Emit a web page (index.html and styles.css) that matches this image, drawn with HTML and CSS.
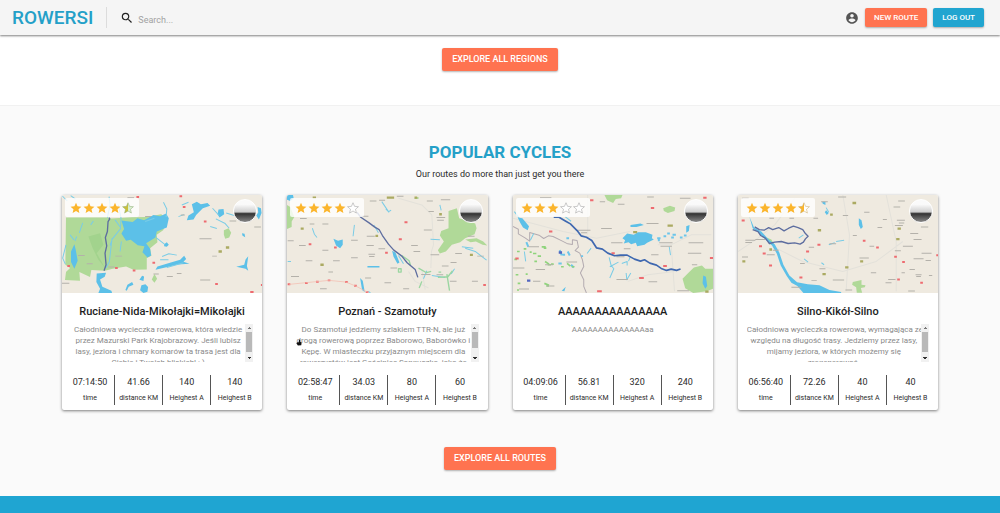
FILE: index.html
```
<!DOCTYPE html>
<html lang="en">
<head>
<meta charset="utf-8">
<meta name="viewport" content="width=device-width, initial-scale=1">
<title>Rowersi</title>
<link rel="stylesheet" href="styles.css">
</head>
<body>
<svg class="defs" aria-hidden="true">
  <defs>
    <linearGradient id="half"><stop offset=".5" stop-color="#fbb52c"/><stop offset=".5" stop-color="#fff"/></linearGradient>
    <linearGradient id="half-green"><stop offset=".5" stop-color="#c9bf3a"/><stop offset=".5" stop-color="#d9efd0"/></linearGradient>
    <path id="star" d="M12 1.500l3.100 7.200 7.800.7-5.900 5.100 1.800 7.600L12 18l-6.800 4.100 1.800-7.600-5.900-5.100 7.800-.7z"/>
  </defs>
</svg>

<header class="topbar">
  <a class="logo" href="#">ROWERSI</a>
  <form class="search" role="search">
    <svg class="search-icon" viewBox="0 0 24 24" aria-hidden="true"><path d="M15.500 14h-.79l-.28-.27A6.470 6.470 0 0 0 16 9.500 6.500 6.500 0 1 0 9.500 16c1.610 0 3.090-.59 4.230-1.570l.27.28v.79l5 4.990L20.490 19l-4.990-5zm-6 0C7.010 14 5 11.990 5 9.500S7.010 5 9.500 5 14 7.010 14 9.500 11.990 14 9.500 14z"/></svg>
    <input class="search-input" type="search" placeholder="Search..." aria-label="Search">
  </form>
  <nav class="actions">
    <a class="account" href="#" aria-label="Account"><svg viewBox="0 0 24 24"><path d="M12 2C6.480 2 2 6.480 2 12s4.480 10 10 10 10-4.480 10-10S17.520 2 12 2zm0 3c1.660 0 3 1.340 3 3s-1.340 3-3 3-3-1.340-3-3 1.340-3 3-3zm0 14.200c-2.500 0-4.710-1.280-6-3.220.03-1.990 4-3.080 6-3.080 1.990 0 5.970 1.090 6 3.080-1.290 1.940-3.500 3.220-6 3.220z"/></svg></a>
    <button class="btn btn-small" type="button">NEW ROUTE</button>
    <button class="btn btn-small btn-blue" type="button">LOG OUT</button>
  </nav>
</header>

<main>
  <section class="regions">
    <button class="btn" type="button">EXPLORE ALL REGIONS</button>
  </section>

  <section class="cycles">
    <h2 class="heading">POPULAR CYCLES</h2>
    <p class="subheading">Our routes do more than just get you there</p>

    <div class="cards">
      <article class="card">
        <div class="cover">
          <svg class="map" viewBox="36 30 600 295" preserveAspectRatio="none" aria-hidden="true">
            <path class="wood" d="M48 98L175 98 182 101 245 97 290 96 333 88 345 96 340 135 320 150 322 172 300 190 304 213 290 220 290 254 250 255 228 245 188 252 165 258 124 256 120 277 88 262 90 288 45 286 48 262 60 250 46 240z"/>
            <path class="wood-dark" d="M115 155L150 145 160 180 140 205 165 250 145 225 128 190z"/>
            <path class="water" d="M214 107L248 111 262 100 282 106 310 90 330 94 348 86 356 100 350 128 320 140 316 158 288 175 300 192 303 212 292 218 277 202 283 184 263 181 242 165 228 168 214 146 222 132z"/>
            <path class="water" d="M140 266L168 264 164 276 150 284 157 306 184 318 186 325 145 325 150 312 139 292z M274 302l12-3 8 8-2 14-12 4-10-8z M425 58l15-8 12 8 20-4 8 8-22 8-20 20-8 14-20 2 5-14 16-10z M505 74l15-2 2 16-14 10-6-10z M322 245l40-12 28-8 12-12 6 10-8 8 18 6-36 2-30 8-36 8z M342 178l8-6 6 8-6 6-8-2z M622 66l10 4 2 14-8 20-8-12 6-10z M575 145l8 2 2 10-8-4z M594 214l-4 30 4 14-8-6-28-6 24-6 4-16z M268 285l8-12 6 2-2 14z M232 300l14-8 4 8-14 6-6 12-4-2z M63 200l10-22 4 16 6 34-10 24-10-20z"/>
            <path class="stream" d="M177 35L180 60 172 98M205 60l8 40-2 32-24 30-7 20M186 160l-8 70-10 20M195 105l18 25M214 170l-4 30M340 52l10 20-2 24M336 215l20-8 24 4M330 225l25 0M350 248l50-14M487 70l20 22M395 60l20-8M385 95l16-6M497 102l28 14 12 14M480 125l20 6M528 84l24 8M62 32l14 10M37 33l15 15M98 114l-10 30M48 180l-10 40 8 18M80 155l-5 14M130 108l-8 12M60 150l12 15M318 158l25 20M285 110l28-10"/>
            <path class="wood" d="M521 136l14-6 8 14-6 14-12 4-4-12zM313 268l8 14-8 12-8-10z"/>
            <path class="olive" d="M505 200h10M527 188h10"/>
            <path class="label" d="M232 38h20M448 162h36M450 286h30M486 214h14M350 275h18M380 266h14M538 108h20M612 126h20M84 212h20M110 237h18M196 214h20M285 95h18M36 296h22M310 268h16M175 247h18M392 90h12"/>
            <path class="badge" d="M259 36h8M388 34h8M398 66h8M461 110h8M52 244h8M195 250h8M248 257h8M307 234h8M495 298h8M600 322h10M632 301h6"/>
            <path class="track" d="M177 98l2 4-5 8-2 30-6 18 4 25-5 22 3 35-6 18"/>
          </svg>
          <span class="rating" role="img" aria-label="4.5 out of 5 stars">
            <svg viewBox="0 0 24 24"><use href="#star"/></svg><svg viewBox="0 0 24 24"><use href="#star"/></svg><svg viewBox="0 0 24 24"><use href="#star"/></svg><svg viewBox="0 0 24 24"><use href="#star"/></svg><svg class="part part-green" viewBox="0 0 24 24"><use href="#star"/></svg>
          </span>
          <span class="avatar"></span>
        </div>
        <h3 class="title">Ruciane-Nida-Mikołajki=Mikołajki</h3>
        <div class="about">
          <p class="text">Całodniowa wycieczka rowerowa, która wiedzie<br>przez Mazurski Park Krajobrazowy. Jeśli lubisz<br>lasy, jeziora i chmary komarów ta trasa jest dla<br>Ciebie i Twoich bliskich! : )</p>
          <span class="scroll" aria-hidden="true"></span>
        </div>
        <dl class="stats">
          <div class="stat"><dt>time</dt><dd>07:14:50</dd></div>
          <div class="stat"><dt>distance KM</dt><dd>41.66</dd></div>
          <div class="stat"><dt>Heighest A</dt><dd>140</dd></div>
          <div class="stat"><dt>Heighest B</dt><dd>140</dd></div>
        </dl>
      </article>

      <article class="card">
        <div class="cover">
          <svg class="map" viewBox="36 30 600 295" preserveAspectRatio="none" aria-hidden="true">
            <path class="wood" d="M520 78L545 70 552 100 600 116 604 130 598 148 570 160 555 172 530 180 512 200 494 206 488 196 506 170 494 152 498 138 520 130zM36 60l10 6 12 30-8 14 0 16-14 6zM570 164l34-4 20 10 12 12-14-2-20-10-16 2zM420 36l10 0 0 6-12 0z"/>
            <path class="road" d="M370 40l70 20 30 30 5 90-6 20-2 50M440 255l10 60M400 260l20 30 40 20"/>
            <path class="water" d="M175 162l14 6 14-4 0 16-8 10-12-8zM351 198l10 5 12 30-6 4-12-22zM255 280l8 8 6 34-8-6zM36 30l18 0 2 10-10 8-10-4zM277 244l36 0 0 4-36 0z"/>
            <path class="stream" d="M320 50l20 30 8-4M332 72l10 10M112 130l6 18 8 10M238 120l-4 34M296 120l14 24M466 163l28 2M570 190l30 10 34 26M560 186l34 4M494 60l4 16M38 230h10M370 212l15 25M470 272l40 6M528 268l10-16M455 258l-10 24M280 320l6 5"/>
            <path class="park" d="M380 212l22 16 4 14M370 252h8v10h-8zM430 250l24 14 14-4M515 268l8 50M490 262h8M488 278l30-2 14-18M440 290l-8 20"/>
            <path class="olive" d="M113 38h10M77 131h9M136 240h10M301 153h8M335 38h22M418 38h8M584 210h9M492 88h8"/>
            <path class="label" d="M75 101h20M104 117h14M142 117h18M38 168h18M72 182h20M142 196h18M228 166h20M228 219h20M174 228h20M92 228h20M48 275h24M284 48h20M312 46h18M365 34h20M455 48h18M497 44h28M258 94h22M274 182h22M310 192h20M275 154h24M415 200h20M446 135h24M460 80h16M484 98h26M486 106h20M408 182h20M346 250h20M270 280h18M328 294h20M135 312h20M384 312h18M438 269h28M484 270h20M524 290h20M540 206h20M606 214h20M578 154h20M500 244h20M466 210h26M280 208h20M282 215h16M590 290h18M160 262h14M526 233h18"/>
            <path class="badge" d="M177 188h8M101 178h8M371 163h9M330 204h8M388 112h9M38 299h8M90 295h8M123 291h8M158 287h8M210 292h8M237 303h8M272 323h8M624 301h8"/>
            <path class="rail" d="M42 299l50-5 70-7 50 5 30 12 36 19"/>
            <path class="track" d="M246 82l10 14 26 18 16 12 14 8 10 18 18 26 16 18 24 18 16 20 24 20 8 24"/>
          </svg>
          <span class="rating" role="img" aria-label="4 out of 5 stars">
            <svg viewBox="0 0 24 24"><use href="#star"/></svg><svg viewBox="0 0 24 24"><use href="#star"/></svg><svg viewBox="0 0 24 24"><use href="#star"/></svg><svg viewBox="0 0 24 24"><use href="#star"/></svg><svg class="empty" viewBox="0 0 24 24"><use href="#star"/></svg>
          </span>
          <span class="avatar"></span>
        </div>
        <h3 class="title">Poznań - Szamotuły</h3>
        <div class="about">
          <p class="text">Do Szamotuł jedziemy szlakiem TTR-N, ale już<br>drogą rowerową poprzez Baborowo, Baborówko i<br>Kępę. W miasteczku przyjaznym miejscem dla<br>rowerzystów jest Gościniec Sanguszko, jako że</p>
          <span class="scroll scroll-short" aria-hidden="true"></span>
        </div>
        <dl class="stats">
          <div class="stat"><dt>time</dt><dd>02:58:47</dd></div>
          <div class="stat"><dt>distance KM</dt><dd>34.03</dd></div>
          <div class="stat"><dt>Heighest A</dt><dd>80</dd></div>
          <div class="stat"><dt>Heighest B</dt><dd>60</dd></div>
        </dl>
        <svg class="pointer" viewBox="0 0 16 18" aria-hidden="true"><path d="M8 1l3 1 0 5 4 2-1 7-9 1-4-6 2-3 4 1z"/></svg>
      </article>

      <article class="card">
        <div class="cover">
          <svg class="map" viewBox="36 30 600 295" preserveAspectRatio="none" aria-hidden="true">
            <path class="wood" d="M544 282l20-20 14-14 24-6 10 10 24 0 0 60-20 8-40 5-24-14zM310 30l54 0-4 10-16 2-8 12-18-8zM486 70l20-8 16 6-2 10-20 6-12-6z"/>
            <path class="road" d="M36 100l150 40 100 20 100-20M470 180l40 0 60-30 60 0M510 180l10 140M260 30l0 120M380 290l60-20 80-10"/>
            <path class="border" d="M36 125l16 8 0 14 20 12 14 10 0-26 28 8 14 10 14-8 14 2 28 14 16 8 14 2 0-14 14 2 4 20-10 10 14 8 8 20 4 20-10 20 10 20 0 20 8 20"/>
            <path class="water" d="M378 146l20 4 12-8 24 0 20 8-2 10 6 4-20 10-8 6-22 4-4-10-14 4-8-6-14 4 4-10-8-6zM388 120l30-4 10 4-22 6-18 0zM50 98l14 2 20 24-4 12-14-8-8-14zM606 272l8 4 4 28-6 8-8-16zM182 318l12-12-4 14zM555 124l10-4-2 18-8 6z"/>
            <path class="stream" d="M324 218l6 24 8 10-12 28M326 246l26-14M362 236l16-6 0 12M388 215l-6 14M375 265l2 20 12-20M504 185l4 26M70 200l4 30M98 146l-10 20M270 190l-12 16M40 80l14 18M192 95l18 14"/>
            <path class="specks-blue" d="M468 160h10M487 154h8M498 146h8M514 150h10M510 158h8M536 158h8M548 152h8M176 196l6 16M184 210h8M172 236h10M200 200l6 12M76 172l6 14M196 160h8M210 240l8 8M240 214h6M470 166h6"/>
            <path class="specks" d="M48 200h8M68 192h8M110 214h10M128 190h8M122 186h12M132 230l12 8M140 240h10M100 230h8M150 238h8M198 236l10 8M212 246h8M40 224h8M96 206h10M86 202h6M44 270h8M180 246h8M50 296h8M130 296l14 6M136 304h8M74 268h6M48 316h6"/>
            <path class="olive" d="M396 142h12M499 122h16M612 321h10"/>
            <path class="label" d="M117 38h34M296 50h16M350 58h20M438 36h20M536 40h32M300 131h32M330 174h34M436 116h36M368 192h20M450 210h22M474 174h40M478 184h34M562 174h44M560 205h40M572 240h16M228 136h40M240 144h18M82 186h32M36 250h34M104 254h28M196 232h32M96 290h22M54 313h30M346 284h34M442 291h26M528 318h36M132 240h24M136 304h24M346 216h24"/>
            <path class="badge" d="M267 46h10M449 69h10M144 140h10M331 205h10M486 244h11M414 280h14M288 320h14M43 221h10M606 38h10M626 220h10"/>
            <path class="badge-blue" d="M173 203h10M78 288h10"/>
            <path class="track track-blue" d="M158 97l16 0 20 12 14 8 20 20 12 16 16 4 16 10 14 22 18 4 16 12 20 8 18-2 20 0 22 12 18 6 12-4 16 10 20 6 14 10 16 6 14-4 16 4 12-4"/>
          </svg>
          <span class="rating" role="img" aria-label="3 out of 5 stars">
            <svg viewBox="0 0 24 24"><use href="#star"/></svg><svg viewBox="0 0 24 24"><use href="#star"/></svg><svg viewBox="0 0 24 24"><use href="#star"/></svg><svg class="empty" viewBox="0 0 24 24"><use href="#star"/></svg><svg class="empty" viewBox="0 0 24 24"><use href="#star"/></svg>
          </span>
          <span class="avatar"></span>
        </div>
        <h3 class="title">AAAAAAAAAAAAAAA</h3>
        <div class="about">
          <p class="text">AAAAAAAAAAAAAAaa</p>
        </div>
        <dl class="stats">
          <div class="stat"><dt>time</dt><dd>04:09:06</dd></div>
          <div class="stat"><dt>distance KM</dt><dd>56.81</dd></div>
          <div class="stat"><dt>Heighest A</dt><dd>320</dd></div>
          <div class="stat"><dt>Heighest B</dt><dd>240</dd></div>
        </dl>
      </article>

      <article class="card">
        <div class="cover">
          <svg class="map" viewBox="36 30 600 295" preserveAspectRatio="none" aria-hidden="true">
            <path class="road" d="M36 200l60-40 50-40 60-80M150 190l80 40 120 30 100-30 80-60M350 30l20 120-10 170M480 30l30 140 0 150"/>
            <path class="wood" d="M122 158l14 6 8 14-14 0zM380 292l26-6 0 14 12 2-2 6-12 2 4 14-16 0-2-16-12-8z"/>
            <path class="water" d="M70 95L84 128 106 140 128 164 146 178 160 204 172 240 190 272 213 293 245 299 280 302 310 316 345 322 345 325 232 325 214 304 196 294 182 274 164 242 152 206 138 182 120 166 98 144 80 130z"/>
            <path class="water" d="M398 100l8 6 4 20-6 6-6-12zM300 76l8 8-6 6-6-8zM288 50l10 0 0 10-8-4z"/>
            <path class="stream" d="M308 180l18-6M330 170l24-4M234 222l12 10M286 234l8 6M218 160l14-10M300 68l8 14"/>
            <path class="olive" d="M379 54h11M275 136h10M312 89h8M514 131h10M510 163h10M49 230h9M357 248h10M289 268h10M402 230h9M130 194h8"/>
            <path class="label" d="M48 40h20M285 50h20M336 36h24M516 48h20M502 66h20M414 82h16M350 92h16M470 104h12M512 106h24M518 114h16M566 56h18M570 95h20M584 126h22M552 146h24M506 122h24M58 166h30M58 173h20M88 164h30M48 217h18M122 210h24M140 196h18M248 187h16M222 236h14M280 252h18M310 177h20M380 152h12M430 184h14M400 220h28M454 128h14M506 198h18M562 164h24M530 184h30M586 205h30M562 222h30M598 227h16M434 264h16M486 284h22M478 294h18M568 270h18M570 275h14M608 272h10M526 264h10M256 287h16M196 308h30M320 286h34M358 316h20M546 319h20M550 254h16M130 100h14M190 100h14M262 100h14"/>
            <path class="badge" d="M47 107h9M99 184h9M110 206h9M129 242h9M240 200h9M274 180h9M220 278h9M410 168h8M450 188h8M504 216h8M528 232h8M582 294h8M513 284h8M630 211h7"/>
            <path class="track" d="M86 126l14 8 14 2 14-8 12 6 18-6 16 10 14-8 14-6 14 4 14 6 8 12 8 8-8 8-6 10-10 6-16-4-20 2-20-6-20 2-16 4-12-16-14-8-8-12-16-6"/>
          </svg>
          <span class="rating" role="img" aria-label="4.5 out of 5 stars">
            <svg viewBox="0 0 24 24"><use href="#star"/></svg><svg viewBox="0 0 24 24"><use href="#star"/></svg><svg viewBox="0 0 24 24"><use href="#star"/></svg><svg viewBox="0 0 24 24"><use href="#star"/></svg><svg class="part" viewBox="0 0 24 24"><use href="#star"/></svg>
          </span>
          <span class="avatar"></span>
        </div>
        <h3 class="title">Silno-Kikół-Silno</h3>
        <div class="about">
          <p class="text">Całodniowa wycieczka rowerowa, wymagająca ze<br>względu na długość trasy. Jedziemy przez lasy,<br>mijamy jeziora, w których możemy się<br>zregenerować.</p>
          <span class="scroll" aria-hidden="true"></span>
        </div>
        <dl class="stats">
          <div class="stat"><dt>time</dt><dd>06:56:40</dd></div>
          <div class="stat"><dt>distance KM</dt><dd>72.26</dd></div>
          <div class="stat"><dt>Heighest A</dt><dd>40</dd></div>
          <div class="stat"><dt>Heighest B</dt><dd>40</dd></div>
        </dl>
      </article>
    </div>

    <button class="btn" type="button">EXPLORE ALL ROUTES</button>
  </section>
</main>
<footer class="footer"></footer>
</body>
</html>
```
FILE: styles.css
```
* { box-sizing: border-box; }

body {
  margin: 0;
  min-height: 100vh;
  display: flex;
  flex-direction: column;
  background: #fff;
  color: #2b2b2b;
  font-family: Roboto, "Liberation Sans", sans-serif;
  font-size: 9px;
}

h2, h3, p, dl, dd { margin: 0; }

.defs { position: absolute; width: 0; height: 0; }

.topbar {
  position: relative;
  display: flex;
  align-items: center;
  height: 35px;
  padding: 0 16px 0 12px;
  background: #f5f5f5;
  box-shadow: 0 1px 2px rgba(0, 0, 0, .5);
}

.logo {
  padding-right: 13px;
  border-right: 1px solid #dcdcdc;
  color: #24a0c8;
  font-size: 19px;
  font-weight: 500;
  line-height: 21px;
  text-decoration: none;
}

.search {
  display: flex;
  flex: 1;
  align-items: center;
  gap: 4px;
  padding-left: 13px;
}

.search-icon { width: 14px; height: 14px; fill: #222; }

.search-input {
  flex: 1;
  min-width: 0;
  padding: 4px 0 0;
  border: 0;
  outline: 0;
  background: none;
  font: 9px Roboto, sans-serif;
}

.search-input::placeholder { color: #a2a2a2; }

.actions { display: flex; align-items: center; gap: 6px; }

.account { display: flex; }
.account svg { width: 14px; height: 14px; fill: #555; }

.btn {
  padding: 0 10px;
  border: 0;
  border-radius: 2px;
  background: #ff7350;
  box-shadow: 0 1px 2px rgba(0, 0, 0, .3);
  color: #fff;
  font: 500 9px/23px Roboto, sans-serif;
}

.btn-small { padding: 0 9px; font-size: 8px; line-height: 19px; }
.btn-blue { background: #21a5d0; }

.regions {
  display: flex;
  justify-content: center;
  padding: 13px 0 34px;
}

.cycles {
  display: flex;
  flex-direction: column;
  align-items: center;
  padding: 36px 62px 26px;
  border-top: 1px solid #f1f1f1;
  background: #fafafa;
}

.heading {
  color: #24a0c8;
  font-size: 17px;
  font-weight: 700;
  line-height: 20px;
}

.subheading { padding: 6px 0 15px; line-height: 12px; }

.cards {
  display: grid;
  grid-template-columns: repeat(4, minmax(0, 1fr));
  gap: 25px;
  width: 100%;
  margin-bottom: 37px;
}

.card {
  position: relative;
  border-radius: 2px;
  background: #fff;
  box-shadow: 0 1px 3px rgba(0, 0, 0, .5);
}

.cover { position: relative; }

.map {
  display: block;
  width: 100%;
  height: 98px;
  border-radius: 2px 2px 0 0;
  background: #efeae0;
}

.map path { fill: none; stroke-linejoin: round; }
.map .wood { fill: #b0d998; }
.map .wood-dark { fill: #a2d38d; }
.map .water { fill: #5cc0e8; }
.map .stream { stroke: #7accE6; stroke-width: 3; }
.map .park { stroke: #9ad6a0; stroke-width: 4; }
.map .road { stroke: #e3e1da; stroke-width: 3; }
.map .border { stroke: #b3abb0; stroke-width: 3; }
.map .specks { stroke: #8fd47c; stroke-width: 5; }
.map .specks-blue { stroke: #6cc5ea; stroke-width: 6; }
.map .olive { stroke: #abaa62; stroke-width: 7; }
.map .label { stroke: #b4b1aa; stroke-width: 3; }
.map .badge { stroke: #ee6b70; stroke-width: 6; }
.map .badge-blue { stroke: #5266c0; stroke-width: 7; }
.map .rail { stroke: #f4b8ab; stroke-width: 2; }
.map .track { stroke: #5d6d9f; stroke-width: 4; }
.map .track-blue { stroke: #3f68b0; stroke-width: 5; }

.rating {
  position: absolute;
  top: 3px;
  left: 3px;
  display: flex;
  gap: 1px;
  padding: 4px 5px 3px;
  border-radius: 2px;
  background: rgba(255, 255, 255, .8);
}

.rating svg { width: 12px; height: 12px; fill: #fbb52c; }
.rating .empty { fill: #fff; stroke: #999; stroke-width: 1; }
.rating .part { fill: url(#half); stroke: #c9a860; stroke-width: 1; }
.rating .part-green { fill: url(#half-green); stroke: #8dab72; }

.avatar {
  position: absolute;
  top: 4px;
  right: 5px;
  width: 24px;
  height: 24px;
  border: 1px solid #fff;
  border-radius: 50%;
  background: linear-gradient(#fafafa 20%, #cfcfcf 54%, #333 62%, #888 100%);
}

.title {
  padding: 12px 0 6px;
  color: #1d1d1d;
  font-size: 11px;
  font-weight: 500;
  line-height: 13px;
  text-align: center;
}

.about {
  display: flex;
  height: 38px;
  margin: 0 9px;
  overflow: hidden;
}

.text {
  flex: 1;
  min-width: 0;
  color: #8a8a8a;
  font-size: 8px;
  line-height: 11px;
  text-align: center;
  white-space: nowrap;
}

.scroll {
  width: 8px;
  background:
    conic-gradient(from 135deg at 50% 0, #777 90deg, transparent 0) center 3px / 4px 2px no-repeat,
    conic-gradient(from -45deg at 50% 100%, #333 90deg, transparent 0) center 33px / 4px 2px no-repeat,
    linear-gradient(#b9b9b9, #b9b9b9) center 8px / 6px 20px no-repeat,
    #f1f1f1;
}

.scroll-short { background-size: 4px 2px, 4px 2px, 6px 16px, auto; }

.stats {
  display: grid;
  grid-template-columns: repeat(4, 1fr);
  padding: 13px 4px 5px;
}

.stat {
  display: flex;
  flex-direction: column-reverse;
  justify-content: space-between;
  height: 30px;
  padding: 1px 0;
  text-align: center;
}

.stat + .stat { border-left: 1px solid #555; }
.stat dt { font-size: 7px; line-height: 12px; white-space: nowrap; }
.stat dd { font-size: 9px; line-height: 13px; }

.pointer {
  position: absolute;
  top: 144px;
  left: 9px;
  width: 6px;
  height: 7px;
  fill: #111;
}

.footer { flex: 1 0 17px; background: #1fa5d2; }
```
